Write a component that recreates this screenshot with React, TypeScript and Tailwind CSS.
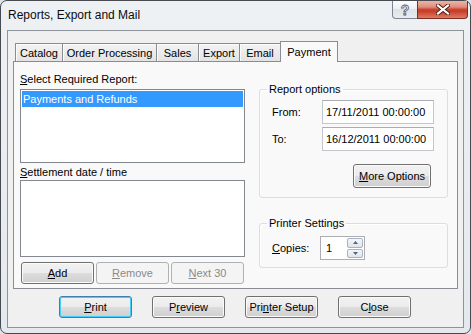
import { FC, ReactNode } from "react";

const btnBase =
  "flex items-center justify-center rounded-[3px] border text-[11px] leading-none";
const btnNormal =
  "border-[#707070] text-black bg-[linear-gradient(to_bottom,#f2f2f2_0%,#ebebeb_50%,#dddddd_50%,#cfcfcf_100%)] shadow-[inset_0_0_0_1px_#fbfbfb]";
const btnFocus =
  "border-[#3c7fb1] text-black bg-[linear-gradient(to_bottom,#f2f2f2_0%,#ebebeb_50%,#dddddd_50%,#cfcfcf_100%)] shadow-[inset_0_0_0_1px_#48cdfa]";
const btnDisabled = "border-[#adb2b5] text-[#8a8a8a] bg-[#f4f4f4]";

interface IBtnProps {
  className: string;
  variant?: "normal" | "focus" | "disabled";
  children: ReactNode;
}

const WinButton: FC<IBtnProps> = ({ className, variant = "normal", children }) => {
  const look =
    variant === "focus" ? btnFocus : variant === "disabled" ? btnDisabled : btnNormal;
  return <div className={`${btnBase} ${look} ${className}`}>{children}</div>;
};

const tabs = [
  { label: "Catalog", w: "w-[48px]" },
  { label: "Order Processing", w: "w-[95px]" },
  { label: "Sales", w: "w-[43px]" },
  { label: "Export", w: "w-[42px]" },
  { label: "Email", w: "w-[42px]" },
];

export default function App() {
  return (
    <div className="w-[471px] h-[334px] overflow-hidden bg-[#dfe4ea] font-['Liberation_Sans',Arial,sans-serif] text-black">
      <div className="w-[471px] h-[334px] rounded-[7px] border border-[#474a4e] bg-[linear-gradient(to_bottom,#eef1f4,#e4e9ee)] flex flex-col">
        {/* title bar */}
        <div className="h-[29px] flex items-start justify-between">
          <div className="pl-[7px] pt-[7px] text-[12px] leading-[15px] text-[#0b0b0b]">
            Reports, Export and Mail
          </div>
          <div className="flex mr-[2px]">
            <div className="w-[26px] h-[18px] rounded-bl-[4px] border border-t-0 border-[#7c8590] bg-[linear-gradient(to_bottom,#fbfcfd_0%,#eceff2_50%,#dde2e7_50%,#e8ecf0_100%)] flex items-center justify-center">
              <span className="text-[14px] leading-none font-bold text-[#f4f4f4] [-webkit-text-stroke:0.8px_#5a5a5a]">
                ?
              </span>
            </div>
            <div className="w-[51px] h-[18px] -ml-px rounded-br-[4px] border border-t-0 border-[#7a2e24] bg-[linear-gradient(to_bottom,#eeb3a6_0%,#e08e7e_35%,#c8442f_50%,#c73d28_60%,#e07a64_100%)] flex items-center justify-center">
              <svg width="14" height="11" viewBox="0 0 14 11">
                <path d="M2 1.5 L12 9.5 M12 1.5 L2 9.5" stroke="#4a1a12" strokeWidth="4" strokeLinecap="square" />
                <path d="M2 1.5 L12 9.5 M12 1.5 L2 9.5" stroke="#ffffff" strokeWidth="2.2" strokeLinecap="square" />
              </svg>
            </div>
          </div>
        </div>

        {/* client area */}
        <div className="ml-[6px] w-[457px] h-[298px] border border-[#8e9399] bg-[#f0f0f0] pt-[10px] pl-[5px] text-[11px]">
          {/* tab strip */}
          <div className="flex items-end h-[20px] ml-[2px]">
            {tabs.map((t, i) => (
              <div
                key={t.label}
                className={`${t.w} ${i > 0 ? "-ml-px" : ""} h-[18px] border border-b-0 border-[#898c95] bg-[linear-gradient(to_bottom,#f3f3f3,#e3e3e3)] shadow-[inset_1px_1px_0_#fcfcfc] flex items-center justify-center pt-[2px] leading-none`}
              >
                {t.label}
              </div>
            ))}
            <div className="w-[58px] -ml-px h-[21px] -mb-px relative z-10 border border-b-0 border-[#898c95] bg-[#f9f9f9] flex items-start justify-center pt-[5px] leading-none">
              Payment
            </div>
          </div>

          {/* tab page */}
          <div className="w-[445px] h-[228px] border border-[#898c95] bg-[#f9f9f9] flex pt-[11px] pl-[6px]">
            {/* left column */}
            <div className="w-[225px] flex flex-col">
              <div className="h-[13px] leading-[13px]">
                <u>S</u>elect Required Report:
              </div>
              <div className="mt-[3px] h-[74px] border border-[#828790] bg-white p-px">
                <div className="h-[16px] leading-[16px] bg-[#3399ff] text-white pl-px">
                  Payments and Refunds
                </div>
              </div>
              <div className="mt-[3px] h-[13px] leading-[13px]">
                <u>S</u>ettlement date / time
              </div>
              <div className="mt-px h-[77px] border border-[#828790] bg-white" />
              <div className="mt-[5px] ml-px flex gap-[2px]">
                <WinButton className="w-[73px] h-[22px]">
                  <u>A</u>dd
                </WinButton>
                <WinButton className="w-[73px] h-[22px]" variant="disabled">
                  <u>R</u>emove
                </WinButton>
                <WinButton className="w-[73px] h-[22px]" variant="disabled">
                  <u>N</u>ext 30
                </WinButton>
              </div>
            </div>

            {/* right column */}
            <div className="ml-[14px] w-[189px] flex flex-col mt-[10px]">
              <fieldset className="border border-[#d5dfe5] rounded-[3px] px-[7px] pb-[9px] shadow-[inset_1px_1px_0_#ffffff]">
                <legend className="px-[2px] leading-[13px]">Report options</legend>
                <div className="mt-[4px] pl-[5px] flex items-center h-[24px]">
                  <div className="w-[50px]">From:</div>
                  <div className="w-[112px] h-[24px] border border-[#c3c6cb] border-t-[#abadb3] bg-white pl-[3px] flex items-center">
                    17/11/2011 00:00:00
                  </div>
                </div>
                <div className="mt-[3px] pl-[5px] flex items-center h-[24px]">
                  <div className="w-[50px]">To:</div>
                  <div className="w-[112px] h-[24px] border border-[#c3c6cb] border-t-[#abadb3] bg-white pl-[3px] flex items-center">
                    16/12/2011 00:00:00
                  </div>
                </div>
                <WinButton className="mt-[13px] ml-[86px] w-[78px] h-[24px]">
                  <u>M</u>ore Options
                </WinButton>
              </fieldset>

              <fieldset className="mt-[19px] border border-[#d5dfe5] rounded-[3px] px-[7px] pb-[7px] shadow-[inset_1px_1px_0_#ffffff]">
                <legend className="px-[2px] leading-[13px]">Printer Settings</legend>
                <div className="mt-[6px] pl-[5px] flex items-center h-[24px]">
                  <div className="w-[48px]">
                    <u>C</u>opies:
                  </div>
                  <div className="w-[45px] h-[24px] border border-[#abadb3] bg-white flex p-px">
                    <div className="flex-1 pl-[4px] flex items-center">1</div>
                    <div className="w-[16px] flex flex-col gap-px">
                      <div className="h-[10px] border border-[#a9b3bf] rounded-[2px] bg-[linear-gradient(to_bottom,#f4f6f8,#dfe5eb)] flex items-center justify-center">
                        <svg width="5" height="3" viewBox="0 0 5 3">
                          <path d="M0 3 L2.5 0 L5 3 Z" fill="#4f6587" />
                        </svg>
                      </div>
                      <div className="h-[10px] border border-[#a9b3bf] rounded-[2px] bg-[linear-gradient(to_bottom,#f4f6f8,#dfe5eb)] flex items-center justify-center">
                        <svg width="5" height="3" viewBox="0 0 5 3">
                          <path d="M0 0 L5 0 L2.5 3 Z" fill="#4f6587" />
                        </svg>
                      </div>
                    </div>
                  </div>
                </div>
              </fieldset>
            </div>
          </div>

          {/* bottom buttons */}
          <div className="mt-[7px] pl-[46px] flex gap-[20px]">
            <WinButton className="w-[73px] h-[22px]" variant="focus">
              <u>P</u>rint
            </WinButton>
            <WinButton className="w-[73px] h-[22px]">
              P<u>r</u>eview
            </WinButton>
            <WinButton className="w-[73px] h-[22px]">
              Pri<u>n</u>ter Setup
            </WinButton>
            <WinButton className="w-[73px] h-[22px]">
              C<u>l</u>ose
            </WinButton>
          </div>
        </div>
      </div>
    </div>
  );
}
